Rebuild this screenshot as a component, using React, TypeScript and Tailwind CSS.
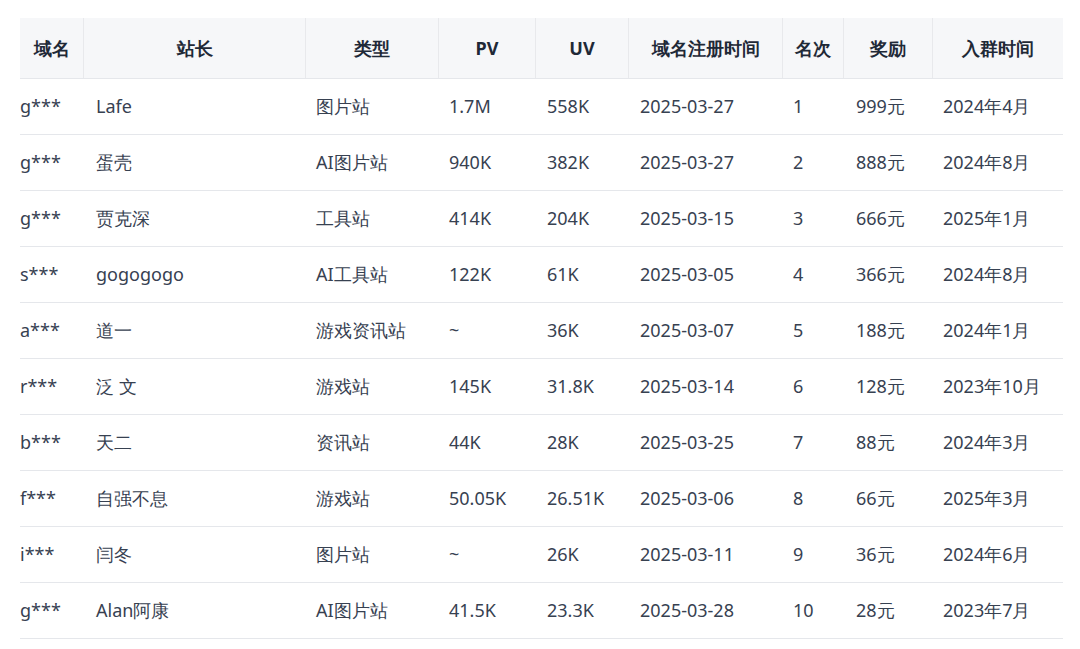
const cols = [
  { h: '域名', w: 'w-[63px]', pad: 'pl-0' },
  { h: '站长', w: 'w-[222px]', pad: 'pl-[13px]' },
  { h: '类型', w: 'w-[133px]', pad: 'pl-[11px]' },
  { h: 'PV', w: 'w-[97px]', pad: 'pl-[11px]' },
  { h: 'UV', w: 'w-[93px]', pad: 'pl-[12px]' },
  { h: '域名注册时间', w: 'w-[154px]', pad: 'pl-[12px]' },
  { h: '名次', w: 'w-[61px]', pad: 'pl-[11px]' },
  { h: '奖励', w: 'w-[89px]', pad: 'pl-[13px]' },
  { h: '入群时间', w: 'w-[131px]', pad: 'pl-[11px]' },
];

const rows = [
  ['g***', 'Lafe', '图片站', '1.7M', '558K', '2025-03-27', '1', '999元', '2024年4月'],
  ['g***', '蛋壳', 'AI图片站', '940K', '382K', '2025-03-27', '2', '888元', '2024年8月'],
  ['g***', '贾克深', '工具站', '414K', '204K', '2025-03-15', '3', '666元', '2025年1月'],
  ['s***', 'gogogogo', 'AI工具站', '122K', '61K', '2025-03-05', '4', '366元', '2024年8月'],
  ['a***', '道一', '游戏资讯站', '~', '36K', '2025-03-07', '5', '188元', '2024年1月'],
  ['r***', '泛 文', '游戏站', '145K', '31.8K', '2025-03-14', '6', '128元', '2023年10月'],
  ['b***', '天二', '资讯站', '44K', '28K', '2025-03-25', '7', '88元', '2024年3月'],
  ['f***', '自强不息', '游戏站', '50.05K', '26.51K', '2025-03-06', '8', '66元', '2025年3月'],
  ['i***', '闫冬', '图片站', '~', '26K', '2025-03-11', '9', '36元', '2024年6月'],
  ['g***', 'Alan阿康', 'AI图片站', '41.5K', '23.3K', '2025-03-28', '10', '28元', '2023年7月'],
];

export default function App() {
  return (
    <div className="bg-white w-[1080px] h-[649px] pt-[18px] pl-[20px] font-['Inter','Noto_Sans_CJK_SC',sans-serif] text-[18px]">
      <div className="w-[1043px]">
        <div className="flex h-[61px] bg-[#f6f7f9] border-b border-[#e5e7eb]">
          {cols.map((c, i) => (
            <div
              key={i}
              className={`${c.w} flex items-center justify-center font-bold text-[#1f2937] ${i > 0 ? 'border-l border-[#e8e9ec]' : ''}`}
            >
              {c.h}
            </div>
          ))}
        </div>
        {rows.map((r, ri) => (
          <div key={ri} className="flex h-[56px] border-b border-[#e5e7eb]">
            {r.map((v, ci) => (
              <div key={ci} className={`${cols[ci].w} ${cols[ci].pad} flex items-center text-[#374151] whitespace-nowrap`}>
                {v}
              </div>
            ))}
          </div>
        ))}
      </div>
    </div>
  );
}
